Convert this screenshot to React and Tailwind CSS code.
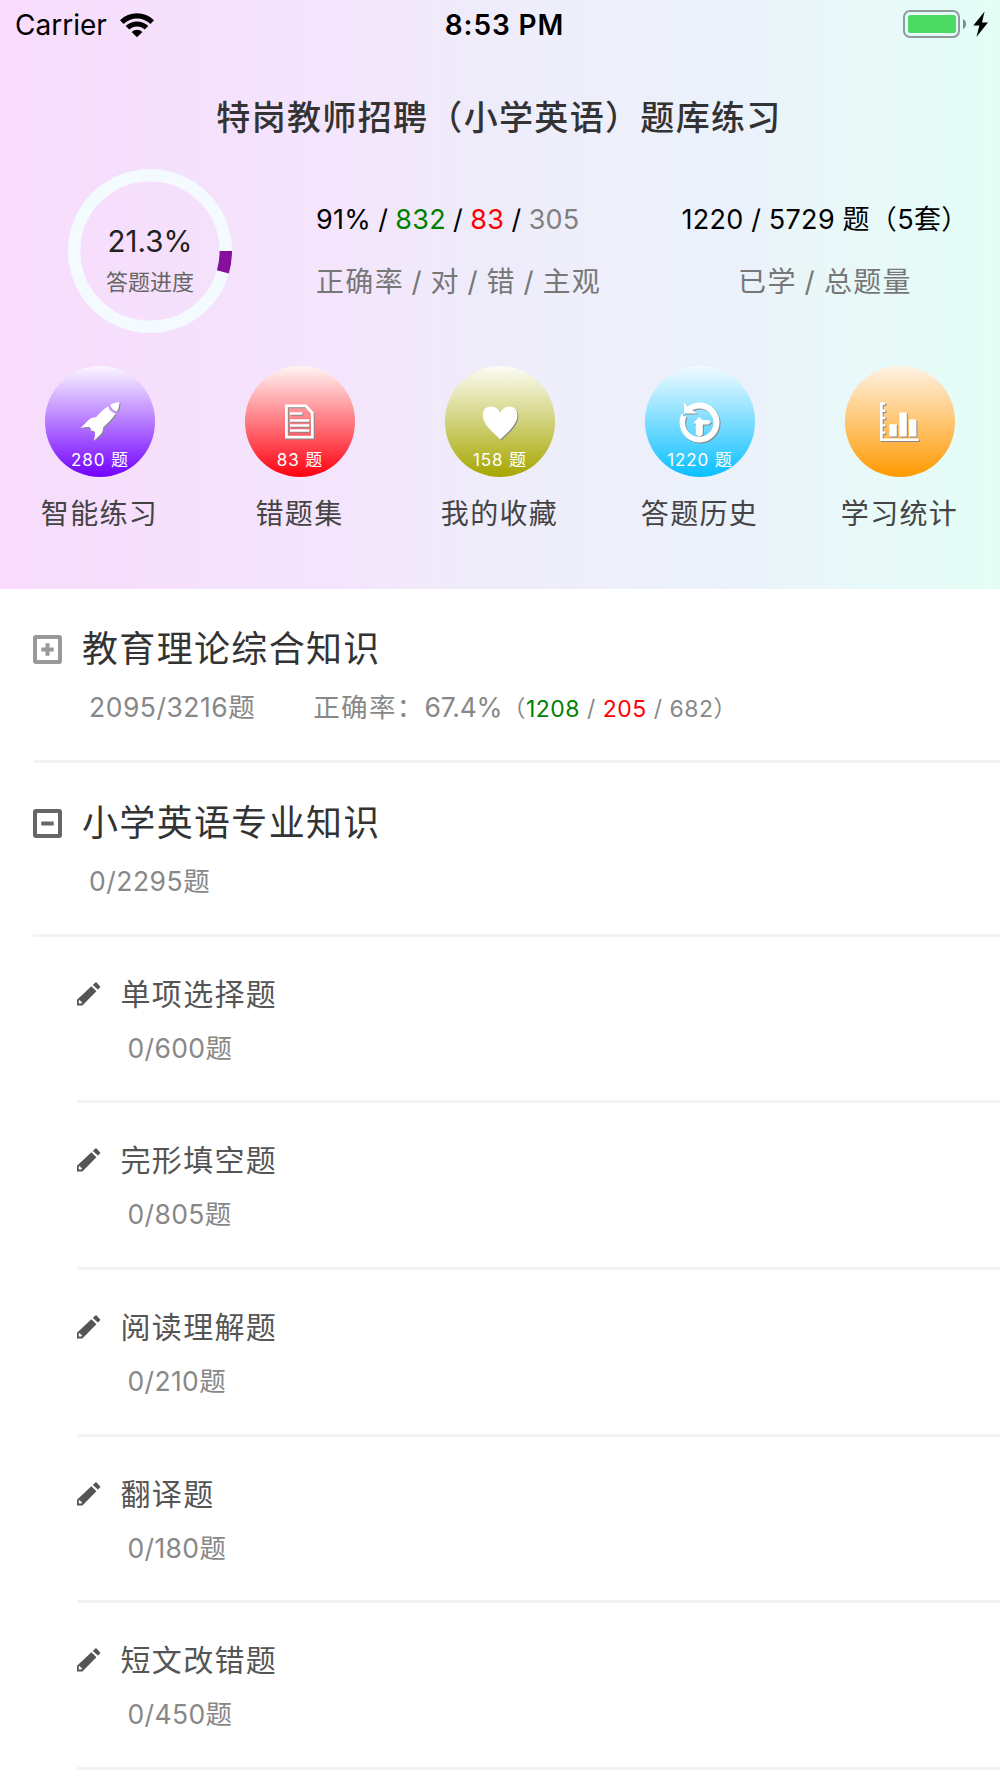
const shortcuts = [
  { label: "智能练习", count: "280 题", bg: "bg-[linear-gradient(#fbf7ff,#7200ff)]", icon: RocketIcon },
  { label: "错题集", count: "83 题", bg: "bg-[linear-gradient(#fff5f3,#ff0010)]", icon: PaperIcon },
  { label: "我的收藏", count: "158 题", bg: "bg-[linear-gradient(#fcfcf5,#a6a600)]", icon: HeartIcon },
  { label: "答题历史", count: "1220 题", bg: "bg-[linear-gradient(#f1fbff,#0abfff)]", icon: HistoryIcon },
  { label: "学习统计", count: "", bg: "bg-[linear-gradient(#fef2e3,#ff9900)]", icon: ChartIcon },
];

const sections = [
  {
    title: "教育理论综合知识",
    progress: "2095/3216题",
    open: false,
    rate: { percent: "67.4%", right: 1208, wrong: 205, other: 682 },
    items: [],
  },
  {
    title: "小学英语专业知识",
    progress: "0/2295题",
    open: true,
    items: [
      { title: "单项选择题", progress: "0/600题" },
      { title: "完形填空题", progress: "0/805题" },
      { title: "阅读理解题", progress: "0/210题" },
      { title: "翻译题", progress: "0/180题" },
      { title: "短文改错题", progress: "0/450题" },
    ],
  },
];

function RocketIcon() {
  return (
    <>
      <path d="M39.5 0.3C36 0.5 33 1.3 30.2 2.8C31 6 33.5 9 37 9.8C38.6 6.8 39.3 3.6 39.5 0.3Z" />
      <path d="M28.4 4.2C23.5 7 19.5 11 16 15.2C12.5 15.4 10.3 16.3 8.3 18.2L0.6 26C4 25.2 7 24.8 9.8 25.2C10.2 26 10.6 26.5 11.2 27L10.6 29L12.8 28.4C13.6 29.2 14.2 29.5 15 29.8C15.2 32.5 14.8 35.5 13.8 38.8L21 32C22.5 30.2 23.2 28 23.2 25.2C28 21 32.5 16.5 35.8 11.4C31.8 10.6 29.2 8 28.4 4.2Z" />
    </>
  );
}

function PaperIcon() {
  return (
    <>
      <path d="M6.4 3.9H25.8L32.3 10.9V35.1H6.4Z" fill="none" stroke="white" strokeWidth="2.8" />
      <path d="M10 10.2H22.3V12.8H10ZM10 17.2H29.3V19.8H10ZM10 22.2H29.3V24.8H10ZM10 27.2H29.3V29.8H10Z" />
    </>
  );
}

function HeartIcon() {
  return (
    <path d="M20.3 37.6C15 31.5 2.8 23.5 2.8 13.2C2.8 8 6.4 4.6 11 4.6C15.2 4.6 18.6 7 20.3 10.6C22 7 25.4 4.6 29.4 4.6C34 4.6 37.4 8 37.4 13.2C37.4 23.5 25.6 31.5 20.3 37.6Z" />
  );
}

function HistoryIcon() {
  return (
    <>
      <path d="M4.2 0.2L7.7 4.4A20 20 0 1 1 1 13L3.2 11V14.2H6.6A14.2 14.2 0 1 0 12.4 8.2L17 11.6H4.2Z" />
      <path d="M19.2 15L22.6 18H28.6L31 20.3L28.6 22.6H22.8V32.5L19.3 34.8L15.8 32.5V21.4H13.2Z" />
    </>
  );
}

function ChartIcon() {
  return (
    <path d="M0 0.2H5.4V2.6L2.7 3.2V7.6H5.4V10H2.7V14.8H5.4V17.2H2.7V22.2H5.4V24.6H2.7V29.4H5.4V31.8H2.7V36.4H38.8V39H0ZM9.4 22.2H16.8V34.4H9.4ZM19.4 10.4H26.8V34.4H19.4ZM29 17.4H36.4V34.4H29Z" />
  );
}

const PencilIcon = () => (
  <svg width="24" height="24" viewBox="0 0 24 24" fill="#555555" className="shrink-0">
    <path d="M18.4 0.6Q19 0 19.6 0.6L23 4.2Q23.6 4.8 23 5.4L20.9 7.5L15.8 2.9Z" />
    <path fillRule="evenodd" d="M14.4 4.2L19.4 9.2L5.4 23.4H0V17.8ZM1.7 18.6L1.8 21.6H4.6L5 19.8L3.4 19.4L3.2 18Z" />
  </svg>
);

const ToggleIcon = ({ open }) => (
  <svg
    width="29"
    height="29"
    viewBox="0 0 29 29"
    fill="none"
    className={open ? "shrink-0 text-[#666666]" : "shrink-0 text-[#999999]"}
    stroke="currentColor"
    strokeWidth="4"
  >
    <rect x="2" y="2" width="25" height="25" rx="1" />
    <path d={open ? "M8.3 14.5H20.7" : "M8.3 14.5H20.7M14.5 8.3V20.7"} />
  </svg>
);

const StatusBar = () => (
  <div className="flex h-[51px] items-center px-[15px] text-[28px] leading-[51px] text-black">
    <div className="flex flex-1 items-center gap-[13px]">
      <span>Carrier</span>
      <svg width="34" height="24" viewBox="0 0 34 24" className="mb-[2px]">
        <path d="M0 7.2A24.5 24.5 0 0 1 34 7.2L30.4 10.9A19.3 19.3 0 0 0 3.6 10.9Z" />
        <path d="M5.7 13A16.2 16.2 0 0 1 28.3 13L24.7 16.6A11 11 0 0 0 9.3 16.6Z" />
        <path d="M11.6 19A7.8 7.8 0 0 1 22.4 19L17 24.2Z" />
      </svg>
    </div>
    <span className="pl-[9px] font-semibold tracking-[0.9px]">8:53 PM</span>
    <div className="flex flex-1 items-center justify-end">
      <svg width="85" height="28" viewBox="0 0 85 28" className="-mr-[3px] mb-[3px]">
        <rect x="1" y="1" width="55" height="26" rx="6" fill="none" stroke="#8f9a9c" strokeWidth="2" />
        <rect x="5" y="5" width="48" height="18" rx="2.5" fill="#4cd964" />
        <path d="M60 9Q63 10.5 63 14T60 19Z" fill="#7f8a8c" />
        <path d="M81.6 1.6L70.3 15.4H76.4L73.4 27L85 12.4H79Z" />
      </svg>
    </div>
  </div>
);

const Progress = () => (
  <div className="grid h-[164px] w-[164px] place-items-center">
    <svg width="164" height="164" viewBox="0 0 164 164" className="col-start-1 row-start-1" fill="none" strokeWidth="12.4">
      <circle cx="82" cy="82" r="75.8" stroke="#f3fbff" />
      <path d="M157.8 82A75.8 75.8 0 0 1 154.9 102.9" stroke="#860f9e" />
    </svg>
    <div className="col-start-1 row-start-1 flex flex-col items-center pt-[22px]">
      <span className="text-[29.5px] leading-[40px] text-[#222222]">21.3%</span>
      <span className="text-[22px] leading-[42px] text-[#666666]">答题进度</span>
    </div>
  </div>
);

const Header = () => (
  <div className="h-[588.7px] bg-[linear-gradient(to_right,#fbdbff_0%,#f7ddfc_4%,#f5e1fc_20%,#f4e5fc_34%,#efebfa_46%,#eeeffb_60%,#eaf2fb_76%,#eaf6f8_79%,#e7faf8_90%,#e4fef6_100%)]">
    <StatusBar />
    <h1 className="mt-[42px] pr-[2px] text-center text-[34px] font-medium leading-[50px] tracking-[1.33px] text-[#333333]">
      特岗教师招聘（小学英语）题库练习
    </h1>
    <div className="mt-[26px] flex h-[164px]">
      <div className="flex w-[300px] justify-center">
        <Progress />
      </div>
      <div className="w-[350px] pt-[26px] pl-[16px]">
        <p className="text-[27px] leading-[50px] tracking-[0.2px] text-black [word-spacing:-0.5px]">
          91% / <span className="text-[#008000]">832</span> / <span className="text-[#ff0000]">83</span> /{" "}
          <span className="text-[#808080]">305</span>
        </p>
        <p className="mt-3 text-[28px] leading-[50px] tracking-[1.33px] text-[#777777] [word-spacing:-1.6px]">正确率 / 对 / 错 / 主观</p>
      </div>
      <div className="w-[350px] pt-[26px] text-center">
        <p className="text-[27px] leading-[50px] tracking-[0.35px] text-black [word-spacing:-0.5px]">1220 / 5729 题（5套）</p>
        <p className="mt-3 text-[28px] leading-[50px] tracking-[1.33px] text-[#777777] [word-spacing:-1.3px]">已学 / 总题量</p>
      </div>
    </div>
    <div className="mt-[33px] grid grid-cols-5">
      {shortcuts.map(({ label, count, bg, icon: Icon }) => (
        <div key={label} className="flex flex-col items-center">
          <div className={`flex h-[110.67px] w-[110.67px] flex-col items-center rounded-full pt-[35.5px] ${bg}`}>
            <svg width="40" height="40" viewBox="0 0 40 40" fill="white" className="overflow-visible drop-shadow-[1px_1px_0_#888888]">
              <Icon />
            </svg>
            <span className="mt-[7.5px] whitespace-nowrap text-[17px] leading-[22px] tracking-[0.9px] text-white">{count}</span>
          </div>
          <span className="mt-[12px] pr-[1px] text-[28px] leading-[50px] tracking-[1.33px] text-[#444444]">{label}</span>
        </div>
      ))}
    </div>
  </div>
);

const Section = ({ title, progress, open, rate, items }) => (
  <div>
    <div className="ml-[33px] h-[174px] border-b-[3px] border-[#f3f3f3] pt-[35.5px] tracking-[1.33px]">
      <div className="flex items-center gap-[20px]">
        <ToggleIcon open={open} />
        <span className="text-[36px] leading-[50px] text-[#333333]">{title}</span>
      </div>
      <div className="mt-[7.5px] flex pl-[56px] text-[26.5px] leading-[50px] text-[#888888]">
        <span className="tracking-[0.5px]">{progress}</span>
        {rate && (
          <span className="ml-[58px]">
            正确率：<span className="tracking-[-0.2px]">{rate.percent}</span>
            <span className="text-[23px] tracking-[0.5px]">
              （<span className="text-[#008000]">{rate.right}</span> / <span className="text-[#ff0000]">{rate.wrong}</span> / {rate.other}）
            </span>
          </span>
        )}
      </div>
    </div>
    {items.map((item) => (
      <div key={item.title} className="ml-[76.5px] h-[166.67px] border-b-[3px] border-[#f3f3f3] pt-[32px] tracking-[1.33px]">
        <div className="flex items-center gap-[20px]">
          <PencilIcon />
          <span className="text-[30px] leading-[50px] text-[#555555]">{item.title}</span>
        </div>
        <p className="mt-[4px] pl-[51px] text-[26.5px] leading-[50px] tracking-[0.35px] text-[#888888]">{item.progress}</p>
      </div>
    ))}
  </div>
);

export default function App() {
  return (
    <div className="h-[1778px] w-[1000px] overflow-hidden bg-white font-[Inter,'Noto_Sans_CJK_SC',sans-serif]">
      <Header />
      {sections.map((section) => (
        <Section key={section.title} {...section} />
      ))}
    </div>
  );
}
